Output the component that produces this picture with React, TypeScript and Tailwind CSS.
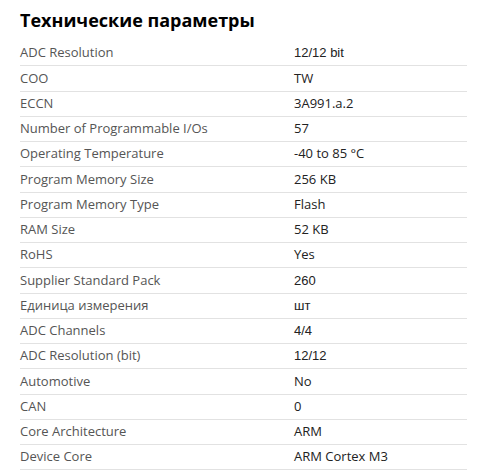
import React from 'react';

type Row = { label: string; value: string; arial?: boolean };

const rows: Row[] = [
  { label: 'ADC Resolution', value: '12/12 bit', arial: true },
  { label: 'COO', value: 'TW' },
  { label: 'ECCN', value: '3A991.a.2' },
  { label: 'Number of Programmable I/Os', value: '57' },
  { label: 'Operating Temperature', value: '-40 to 85 °C' },
  { label: 'Program Memory Size', value: '256 KB' },
  { label: 'Program Memory Type', value: 'Flash' },
  { label: 'RAM Size', value: '52 KB' },
  { label: 'RoHS', value: 'Yes' },
  { label: 'Supplier Standard Pack', value: '260', arial: true },
  { label: 'Единица измерения', value: 'шт', arial: true },
  { label: 'ADC Channels', value: '4/4', arial: true },
  { label: 'ADC Resolution (bit)', value: '12/12', arial: true },
  { label: 'Automotive', value: 'No' },
  { label: 'CAN', value: '0' },
  { label: 'Core Architecture', value: 'ARM' },
  { label: 'Device Core', value: 'ARM Cortex M3' },
];

export default function App() {
  return (
    <div className="w-[498px] h-[471px] bg-white px-5 font-['Open_Sans',sans-serif] overflow-hidden">
      <h2 className="h-[41px] pt-[8px] text-[18px] leading-[24px] font-bold text-black">Технические параметры</h2>
      <div className="w-[447px]">
        {rows.map((r) => (
          <div key={r.label} className="flex h-[25.25px] items-center border-b border-[#e2e2e2] text-[13px]">
            <div className="w-[274px] text-[#555]">{r.label}</div>
            <div className={`text-[#222] ${r.arial ? "font-['Liberation_Sans',sans-serif]" : ''}`}>{r.value}</div>
          </div>
        ))}
      </div>
    </div>
  );
}
